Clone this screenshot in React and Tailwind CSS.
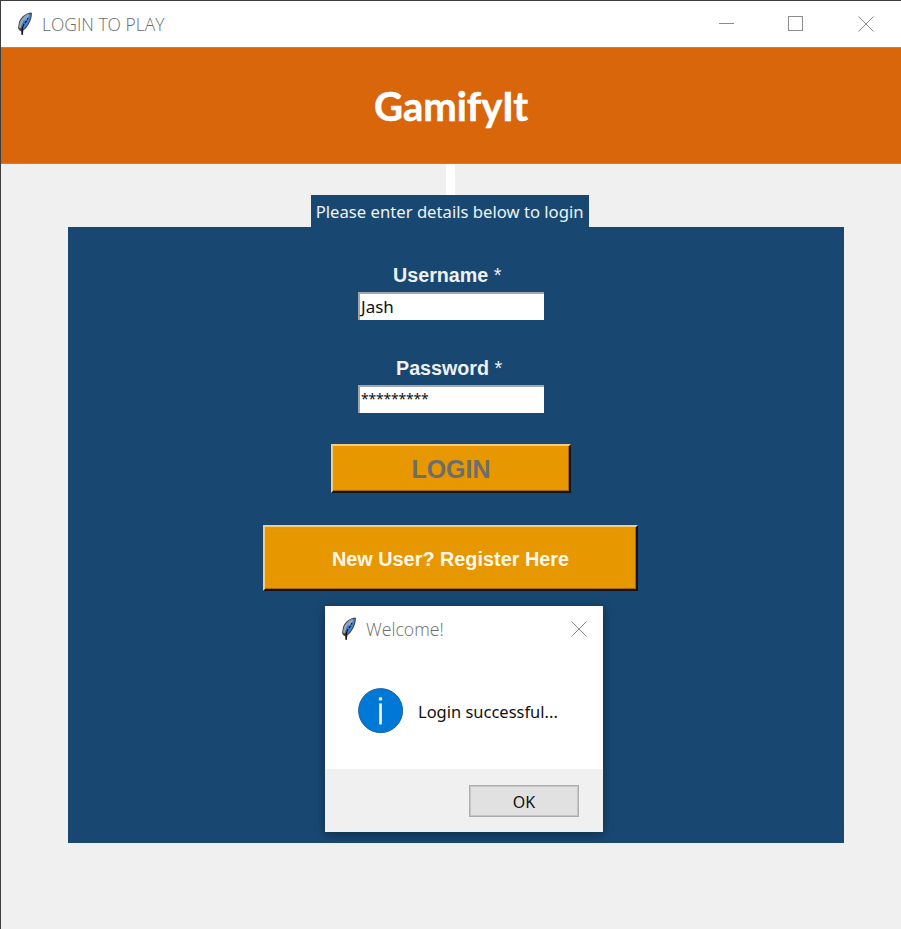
function Feather() {
  return (
    <svg className="h-[24px] w-[16px] shrink-0" viewBox="0 0 16 24">
      <path d="M14.4 0.6 C9.6 0.8 4 4.6 2 10 L1 16.2 L2.6 18.6 L4.4 19.4 L4.6 23 L5.8 23 L6.4 18.6 C10.4 15.6 14.6 9.4 15 1.6 Z" fill="#44474b" />
      <path d="M12.8 1.6 C9 2.4 4.4 6 2.8 11 L2 15.4 L3.8 16.6 C5 11 8 6 12.8 1.6 Z" fill="#9aa6b0" />
      <path d="M13.8 2 C13.4 7.4 10.8 13 6.4 17 L4.2 15.4 C4.6 10.6 7.8 5.6 12 2.4 Z" fill="#4286dc" />
      <path d="M11 5.4 L9.2 9.4 L6.4 13 L5.2 17 L5.2 22.6" fill="none" stroke="#0c0e12" strokeWidth="1.2" strokeDasharray="2.4 1.2 3 1 20" />
      <path d="M11.8 3.2 L7.6 8" stroke="#86b6ea" strokeWidth="1.5" />
    </svg>
  );
}

function Cross() {
  return (
    <svg className="h-[16px] w-[16px] shrink-0" viewBox="0 0 16 16">
      <path d="M0.5 0.5 L15.5 15.5 M15.5 0.5 L0.5 15.5" stroke="#8c8c8c" strokeWidth="1" fill="none" />
    </svg>
  );
}

function TitleBar() {
  return (
    <header className="flex h-[46px] w-full shrink-0 items-center bg-white pb-px pl-[16px] font-['Open_Sans',sans-serif]">
      <Feather />
      <span className="ml-[9px] w-[124px] origin-left scale-x-[0.97] text-[18px] leading-[24px] font-light whitespace-nowrap text-[#6c6c6c]">
        LOGIN TO PLAY
      </span>
      <div className="mr-[27px] ml-auto flex items-center">
        <div className="h-px w-[15px] bg-[#8c8c8c]" />
        <div className="ml-[54px] h-[15px] w-[15px] border border-[#8c8c8c]" />
        <div className="ml-[55px]">
          <Cross />
        </div>
      </div>
    </header>
  );
}

function FieldLabel({ children }) {
  return (
    <span className="inline-block origin-left scale-x-[0.985]">
      {children} <span className="font-normal">*</span>
    </span>
  );
}

function Field({ children }) {
  return (
    <div className="flex h-[28px] w-[186px] items-center border-t-2 border-l-2 border-[#a3a5a8] bg-white font-['Noto_Sans',sans-serif] text-[17px] leading-[24px] font-normal text-[#111]">
      {children}
    </div>
  );
}

function Welcome() {
  return (
    <div className="absolute top-[605px] left-[324px] flex h-[226px] w-[278px] flex-col bg-white font-['Noto_Sans',sans-serif] shadow-[0_2px_10px_rgba(0,0,0,0.4)]">
      <div className="flex h-[46px] items-center pr-[16px] pb-px pl-[16px]">
        <Feather />
        <span className="ml-[9px] origin-left scale-x-[0.98] font-['Open_Sans',sans-serif] text-[18px] leading-[24px] font-light whitespace-nowrap text-[#6c6c6c]">
          Welcome!
        </span>
        <div className="ml-auto">
          <Cross />
        </div>
      </div>
      <div className="flex h-[117px] items-center pl-[33px]">
        <svg className="h-[46px] w-[46px] shrink-0" viewBox="0 0 46 46">
          <circle cx="22.6" cy="22.6" r="22" fill="#0078d7" stroke="#1a64a5" strokeWidth="1" />
          <rect x="20.9" y="9.4" width="3.2" height="3" fill="#fff" />
          <rect x="21.2" y="15.4" width="2.6" height="21" fill="#fff" />
        </svg>
        <span className="mt-[2px] ml-[14px] origin-left scale-x-[1.03] text-[16px] leading-[24px] whitespace-nowrap text-[#111]">Login successful...</span>
      </div>
      <div className="flex h-[63px] items-center justify-end bg-[#f0f0f0] pt-px pr-[24px]">
        <button className="flex h-[32px] w-[110px] items-center justify-center border border-[#adadad] bg-[#e1e1e1] text-[16px] text-[#111] shadow-[inset_0_0_0_1px_#c6c6c6]">
          <span className="mt-px">OK</span>
        </button>
      </div>
    </div>
  );
}

export default function App() {
  return (
    <div className="relative flex h-[929px] w-[901px] flex-col overflow-hidden border-t border-l border-[#3d3c3f] bg-[#f0f0f0]">
      <TitleBar />
      <div className="flex h-[117px] shrink-0 items-center justify-center border-y border-[#e0782a] bg-[#d9660b]">
        <h1 className="font-['Lato',sans-serif] text-[40px] leading-[48px] font-bold text-white [-webkit-text-stroke:0.5px_white]">GamifyIt</h1>
      </div>
      <div className="ml-[445px] h-[31px] w-[9px] shrink-0 bg-white" />
      <div className="ml-[310px] flex h-[32px] w-[278px] shrink-0 items-center justify-center bg-[#184872]">
        <span className="mt-[2px] scale-x-[0.98] font-['Noto_Sans',sans-serif] text-[17px] leading-[24px] whitespace-nowrap text-[#eef2f5]">Please enter details below to login</span>
      </div>
      <main className="ml-[67px] flex h-[616px] w-[776px] shrink-0 flex-col bg-[#184872] font-['Liberation_Sans',Arial,sans-serif] font-bold">
        <div className="mt-[36px] ml-[325px] text-[20px] leading-[24px] whitespace-nowrap text-[#f0f0f0]">
          <FieldLabel>Username</FieldLabel>
        </div>
        <div className="mt-[5px] ml-[290px]">
          <Field>
            <span className="ml-px origin-left">Jash</span>
          </Field>
        </div>
        <div className="mt-[36px] ml-[328px] text-[20px] leading-[24px] whitespace-nowrap text-[#f0f0f0]">
          <FieldLabel>Password</FieldLabel>
        </div>
        <div className="mt-[5px] ml-[290px]">
          <Field>
            <span className="mb-[2px] ml-px text-[14px] tracking-[-0.2px]">*********</span>
          </Field>
        </div>
        <button className="mt-[31px] ml-[263px] flex h-[49px] w-[240px] items-center justify-center border-2 border-t-[#f5cd7e] border-r-[#17120a] border-b-[#17120a] border-l-[#f5cd7e] bg-[#e79700] pt-[2px] text-[25px] font-bold text-[#6d6d6d] shadow-[inset_-1px_-1px_0_#a36b05]">
          LOGIN
        </button>
        <button className="mt-[32px] ml-[195px] flex h-[66px] w-[375px] items-center justify-center border-2 border-t-[#f5cd7e] border-r-[#17120a] border-b-[#17120a] border-l-[#f5cd7e] bg-[#e79700] pt-[2px] text-[20px] font-bold text-[#fff8ea] shadow-[inset_-1px_-1px_0_#a36b05]">
          <span className="scale-x-[0.992]">New User? Register Here</span>
        </button>
      </main>
      <Welcome />
    </div>
  );
}
